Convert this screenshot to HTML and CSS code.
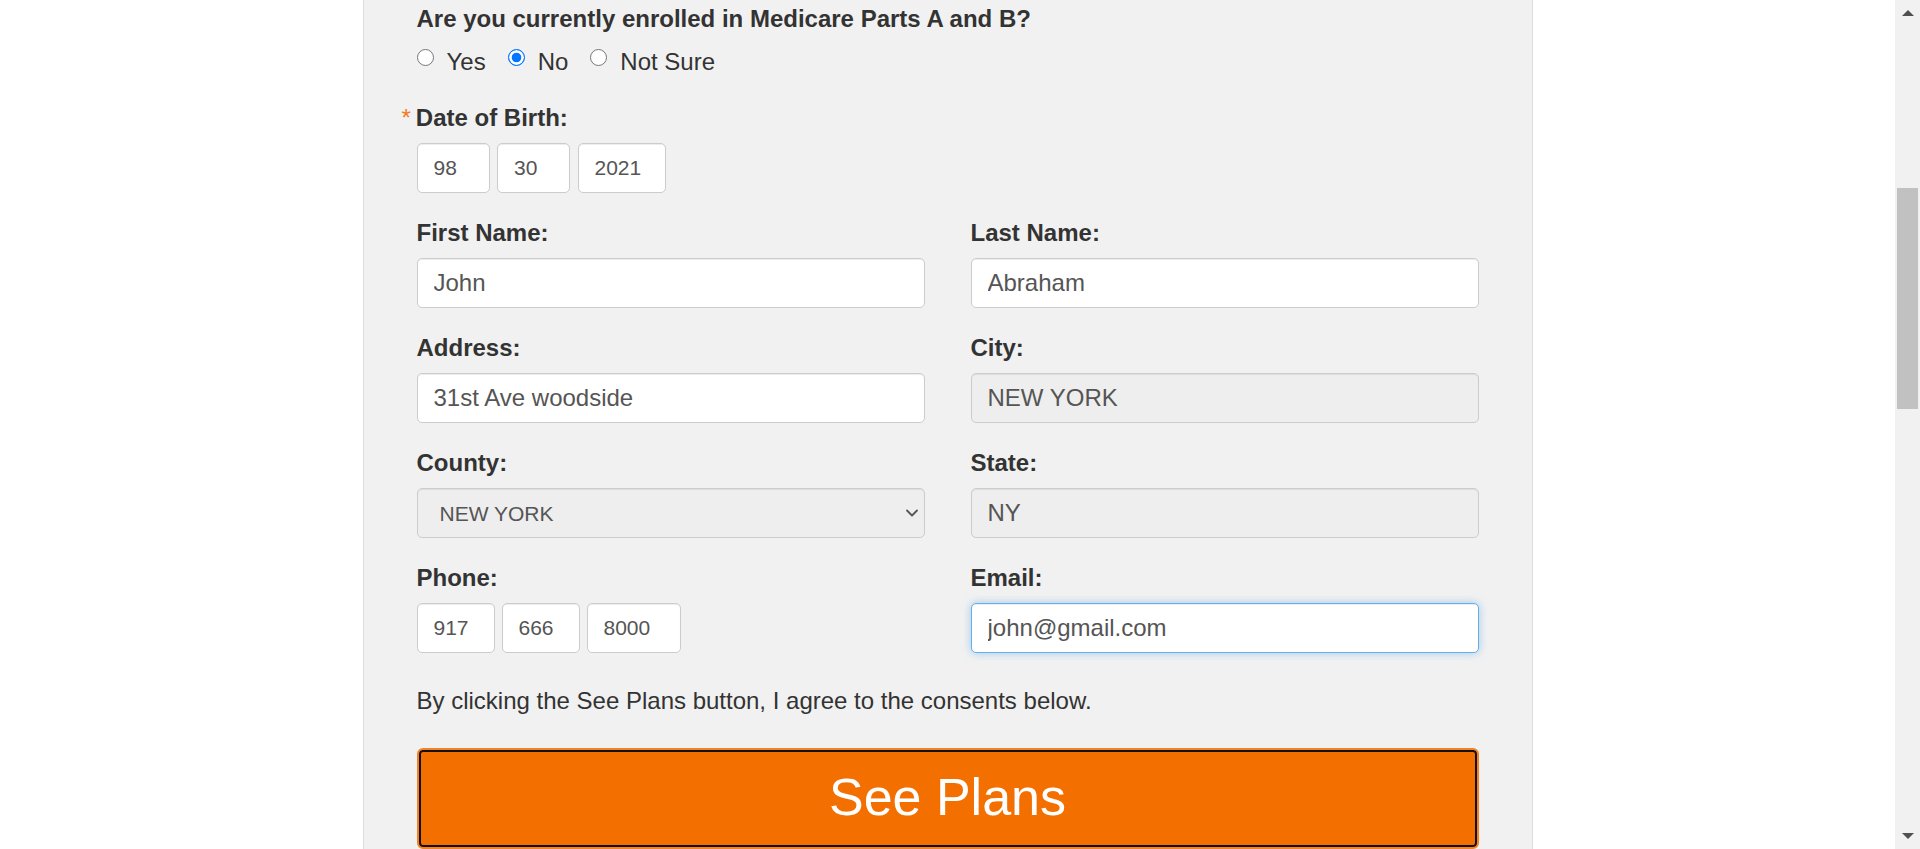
FILE: index.html
```html
<!DOCTYPE html>
<html lang="en">
<head>
<meta charset="utf-8">
<title>See Plans</title>
<link rel="stylesheet" href="styles.css">
</head>
<body>
<div class="screen">
  <main class="viewport">
    <div class="panel">
      <form class="form">
        <h2 class="question">Are you currently enrolled in Medicare Parts A and B?</h2>
        <div class="radios">
          <label class="radio-opt"><input class="radio" type="radio" name="medicare"><span>Yes</span></label>
          <label class="radio-opt"><input class="radio" type="radio" name="medicare" checked><span>No</span></label>
          <label class="radio-opt"><input class="radio" type="radio" name="medicare"><span>Not Sure</span></label>
        </div>

        <div class="field">
          <label class="field-label"><span class="req">*</span>Date of Birth:</label>
          <div class="split split-dob">
            <input class="input input-sm w-dob-m" type="text" value="98">
            <input class="input input-sm w-dob-d" type="text" value="30">
            <input class="input input-sm w-dob-y" type="text" value="2021">
          </div>
        </div>

        <div class="grid">
          <div class="field">
            <label class="field-label">First Name:</label>
            <input class="input" type="text" value="John">
          </div>
          <div class="field">
            <label class="field-label">Last Name:</label>
            <input class="input" type="text" value="Abraham">
          </div>
          <div class="field">
            <label class="field-label">Address:</label>
            <input class="input" type="text" value="31st Ave woodside">
          </div>
          <div class="field">
            <label class="field-label">City:</label>
            <input class="input input-readonly" type="text" value="NEW YORK" readonly>
          </div>
          <div class="field">
            <label class="field-label">County:</label>
            <div class="select-wrap">
              <select class="input input-select">
                <option>NEW YORK</option>
              </select>
              <svg class="chevron" width="12" height="8" viewBox="0 0 12 8" aria-hidden="true"><polyline points="1,1.5 6,6.5 11,1.5" fill="none" stroke="#555" stroke-width="1.8" stroke-linecap="round" stroke-linejoin="round"/></svg>
            </div>
          </div>
          <div class="field">
            <label class="field-label">State:</label>
            <input class="input input-readonly" type="text" value="NY" readonly>
          </div>
          <div class="field">
            <label class="field-label">Phone:</label>
            <div class="split split-phone">
              <input class="input input-sm w-ph-a" type="text" value="917">
              <input class="input input-sm w-ph-b" type="text" value="666">
              <input class="input input-sm w-ph-c" type="text" value="8000">
            </div>
          </div>
          <div class="field">
            <label class="field-label">Email:</label>
            <input class="input input-focus" type="text" value="john@gmail.com">
          </div>
        </div>

        <p class="consent">By clicking the See Plans button, I agree to the consents below.</p>
        <button class="cta" type="button">See Plans</button>
      </form>
    </div>
  </main>

  <div class="scrollbar" aria-hidden="true">
    <div class="sb-btn">
      <svg width="12" height="7" viewBox="0 0 12 7"><polygon points="0,7 6,1 12,7" fill="#505050"/></svg>
    </div>
    <div class="sb-track">
      <div class="sb-thumb" style="margin-top:163px;height:221px"></div>
    </div>
    <div class="sb-btn">
      <svg width="12" height="7" viewBox="0 0 12 7"><polygon points="0,0 6,6 12,0" fill="#505050"/></svg>
    </div>
  </div>
</div>
</body>
</html>
```

FILE: styles.css
```css
html, body {
  margin: 0;
  padding: 0;
  height: 100%;
  overflow: hidden;
  background: #ffffff;
}

body {
  font-family: "Liberation Sans", Arial, sans-serif;
  color: #333333;
}

.screen {
  display: flex;
  height: 100vh;
}

.viewport {
  flex: 1;
  display: flex;
  justify-content: center;
  overflow: hidden;
}

.panel {
  flex: none;
  width: 1170px;
  box-sizing: border-box;
  background: #f1f1f1;
  border-left: 1px solid #dcdcdc;
  border-right: 1px solid #dcdcdc;
  padding: 2px 53px 0;
}

.form {
  margin: 0;
}

.question {
  margin: 0 0 9.4px;
  font-size: 24px;
  line-height: 34px;
  font-weight: bold;
  color: #333333;
}

.radios {
  display: flex;
  margin-bottom: 22.6px;
}

.radio-opt {
  display: flex;
  align-items: flex-start;
  margin-right: 22px;
  font-size: 24px;
  line-height: 34px;
  color: #333333;
}

.radio {
  -webkit-appearance: none;
  appearance: none;
  box-sizing: border-box;
  flex: none;
  width: 17px;
  height: 17px;
  margin: 4px 13px 0 0;
  border: 1.5px solid #767676;
  border-radius: 50%;
  background: #ffffff;
}

.radio:checked {
  border: 1.5px solid #0075ff;
  background: #0075ff;
  box-shadow: inset 0 0 0 2.7px #ffffff;
}

.field {
  margin-bottom: 23.5px;
}

.field-label {
  display: block;
  font-size: 24px;
  line-height: 32px;
  font-weight: bold;
  color: #333333;
  margin-bottom: 9.5px;
}

.req {
  color: #f47a20;
  font-weight: normal;
  margin-left: -15px;
  margin-right: 5px;
}

.input {
  display: block;
  box-sizing: border-box;
  width: 100%;
  height: 50px;
  margin: 0;
  padding: 0 16px;
  border: 1px solid #cccccc;
  border-radius: 5px;
  background: #ffffff;
  box-shadow: inset 0 1px 1px rgba(0, 0, 0, 0.075);
  font-family: "Liberation Sans", Arial, sans-serif;
  font-size: 24px;
  color: #555555;
  outline: none;
}

.input-sm {
  font-size: 21px;
}

.input-readonly {
  background: #eeeeee;
}

.input-focus {
  border-color: #66afe9;
  box-shadow: inset 0 1px 1px rgba(0, 0, 0, 0.075), 0 0 8px rgba(102, 175, 233, 0.6);
}

.split {
  display: flex;
}

.split-dob {
  gap: 7.5px;
}

.split-phone {
  gap: 7px;
}

.w-dob-m { width: 73px; }
.w-dob-d { width: 73px; }
.w-dob-y { width: 88px; }
.w-ph-a { width: 78px; }
.w-ph-b { width: 78px; }
.w-ph-c { width: 94px; }

.grid {
  display: grid;
  grid-template-columns: 1fr 1fr;
  column-gap: 46px;
}

.select-wrap {
  position: relative;
}

.input-select {
  -webkit-appearance: none;
  appearance: none;
  background: #eeeeee;
  font-size: 21px;
  padding-left: 22px;
}

.chevron {
  position: absolute;
  right: 7px;
  top: 21px;
  pointer-events: none;
}

.consent {
  margin: 7.4px 0 30px;
  font-size: 24px;
  line-height: 34px;
  color: #333333;
}

.cta {
  display: block;
  width: 100%;
  height: 101px;
  margin: 0;
  padding: 0 0 4px;
  border: 2px solid #f58220;
  border-radius: 6px;
  background: #f37000;
  box-shadow: inset 0 0 0 2px #111111;
  color: #ffffff;
  font-family: "Liberation Sans", Arial, sans-serif;
  font-size: 52px;
  cursor: pointer;
}

.scrollbar {
  flex: none;
  width: 25px;
  background: #f1f1f1;
  display: flex;
  flex-direction: column;
}

.sb-btn {
  height: 25px;
  display: flex;
  align-items: center;
  justify-content: center;
  flex: none;
}

.sb-track {
  flex: 1;
}

.sb-thumb {
  margin: 0 2px;
  background: #c1c1c1;
}
```
